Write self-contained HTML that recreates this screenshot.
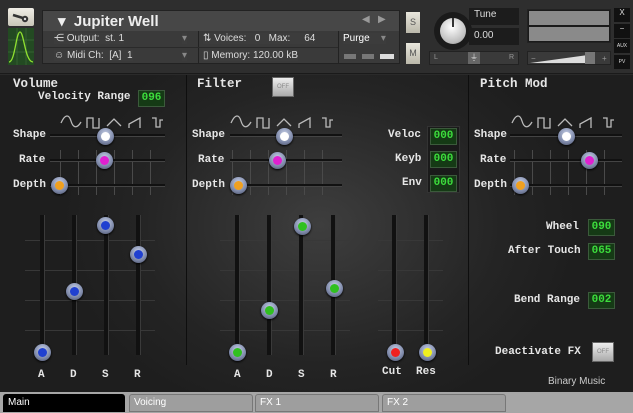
<!DOCTYPE html><html><head><style>
*{margin:0;padding:0;box-sizing:border-box}
body{width:633px;height:413px;overflow:hidden;background:#2a2a2a;font-family:"Liberation Sans",sans-serif;position:relative}
.a{position:absolute}
.lbl{position:absolute;font-family:"Liberation Mono",monospace;font-weight:bold;font-size:11px;color:#e6e6e6;white-space:nowrap}
.ttl{font-size:12.5px}
.k{position:absolute;width:17px;height:17px;margin:-8px 0 0 -8px;border-radius:50%;background:radial-gradient(circle at 50% 35%,#c9d2ea,#7d88a8 60%,#454b60);box-shadow:0 1px 2px #000}
.k i{position:absolute;left:4px;top:4px;width:9px;height:9px;border-radius:50%}
.tr{position:absolute;height:3px;background:#111;border-bottom:1px solid #444}
.vt{position:absolute;width:5px;background:#111;border-right:1px solid #3a3a3a}
.dig{position:absolute;width:27px;height:17px;background:#153a15;border:1px solid #3b5a3b;color:#3cdc3c;font-family:"Liberation Mono",monospace;font-size:11px;font-weight:bold;text-align:center;line-height:15px}
.off{position:absolute;width:22px;height:20px;background:linear-gradient(#eee,#aaa);border:1px solid #666;font-size:6px;color:#888;text-align:center;line-height:18px}
.g{position:absolute;width:1px;background:#4a4a4a}
.tab{position:absolute;top:394px;height:18px;background:#9e9e9e;border:1px solid #777;border-radius:3px 3px 0 0;font-size:10px;color:#fff;padding:2px 4px}
.hb{position:absolute;background:#3c3c3c;color:#ddd;font-size:10px}
</style></head><body>
<div class="a" style="left:0;top:0;width:633px;height:74px;background:#2e2e2e;border-bottom:1px solid #1a1a1a"></div>
<div class="a" style="left:8px;top:8px;width:26px;height:18px;background:linear-gradient(#f0eee6,#c9c6b8);border-radius:2px"></div>
<svg class="a" style="left:8px;top:8px" width="26" height="18"><circle cx="17" cy="11" r="3.2" fill="#333"/><path d="M5 7L15 10" stroke="#333" stroke-width="2.5"/><circle cx="17" cy="11" r="1.2" fill="#ddd"/></svg>
<svg class="a" style="left:8px;top:28px" width="26" height="37"><rect width="26" height="37" fill="#234a22"/><path d="M0 12H26M0 24H26M9 0V37M18 0V37" stroke="#3c6a3a" stroke-width=".7"/><path d="M1 34C7 34 8 4 12 4S17 34 25 34" stroke="#8fe030" fill="none" stroke-width="1.3"/></svg>
<div class="a" style="left:42px;top:10px;width:358px;height:54px;background:#3a3a3a;border:1px solid #222"></div>
<div class="a" style="left:43px;top:11px;width:356px;height:20px;background:#474747"></div>
<div class="a" style="left:58px;top:12px;color:#eee;font-size:15px;font-weight:bold">▾&nbsp; Jupiter Well</div>
<div class="a" style="left:362px;top:14px;color:#999;font-size:10px">◀ &nbsp; ▶</div>
<div class="hb" style="left:54px;top:33px">⋲ Output: &nbsp;st. 1</div><div class="hb" style="left:182px;top:33px;color:#888">▾</div>
<div class="hb" style="left:54px;top:50px">☺ Midi Ch: &nbsp;[A] &nbsp;1</div><div class="hb" style="left:182px;top:50px;color:#888">▾</div>
<div class="hb" style="left:203px;top:33px">⇅ Voices: &nbsp;&nbsp;0 &nbsp;&nbsp;Max: &nbsp;&nbsp;&nbsp;&nbsp;64</div>
<div class="hb" style="left:203px;top:50px">▯ Memory: 120.00 kB</div>
<div class="hb" style="left:343px;top:33px;color:#fff">Purge &nbsp;&nbsp;&nbsp;<span style="color:#888">▾</span></div>
<div class="a" style="left:198px;top:31px;width:1px;height:33px;background:#222"></div>
<div class="a" style="left:338px;top:31px;width:1px;height:33px;background:#222"></div>
<div class="a" style="left:43px;top:47px;width:295px;height:1px;background:#2a2a2a"></div>
<div class="a" style="left:344px;top:54px;width:12px;height:5px;background:#777"></div><div class="a" style="left:362px;top:54px;width:12px;height:5px;background:#777"></div><div class="a" style="left:380px;top:54px;width:14px;height:5px;background:#ddd"></div>
<div class="a" style="left:406px;top:12px;width:14px;height:21px;background:linear-gradient(#e8e6dc,#bbb8aa);color:#555;font-size:9px;text-align:center;line-height:21px">S</div>
<div class="a" style="left:406px;top:43px;width:14px;height:21px;background:linear-gradient(#e8e6dc,#bbb8aa);color:#555;font-size:9px;text-align:center;line-height:21px">M</div>
<div class="a" style="left:434px;top:12px;width:38px;height:38px;border-radius:50%;background:#1a1a1a"></div>
<div class="a" style="left:440px;top:18px;width:26px;height:26px;border-radius:50%;background:radial-gradient(circle at 45% 35%,#fff,#bbb 70%,#777)"></div>
<div class="a" style="left:452px;top:18px;width:2px;height:9px;background:#333"></div>
<div class="a" style="left:469px;top:8px;width:50px;height:17px;background:#1c1c1c;color:#ddd;font-size:10px;padding:1px 5px">Tune</div>
<div class="a" style="left:469px;top:28px;width:50px;height:17px;background:#1c1c1c;color:#ddd;font-size:10px;padding:2px 5px">0.00</div>
<div class="a" style="left:429px;top:51px;width:90px;height:14px;background:#3a3a3a;border:1px solid #222;color:#999;font-size:7px;padding:2px 4px">L<span style="position:absolute;right:4px">R</span><span style="position:absolute;left:38px;top:0;width:12px;height:12px;background:#666;color:#ddd;text-align:center;font-size:8px">⏚</span></div>
<div class="a" style="left:527px;top:9px;width:84px;height:34px;background:#1a1a1a;border:1px solid #222"></div>
<div class="a" style="left:529px;top:11px;width:80px;height:14px;background:#8a8a8a"></div>
<div class="a" style="left:529px;top:27px;width:80px;height:14px;background:#8a8a8a"></div>
<div class="a" style="left:527px;top:51px;width:84px;height:14px;background:#3a3a3a;border:1px solid #222"></div>
<svg class="a" style="left:528px;top:52px" width="82" height="12"><path d="M2 11L60 11L60 3Z" fill="#ddd"/><rect x="57" y="0" width="10" height="12" fill="#777"/><text x="3" y="9" fill="#999" font-size="8">−</text><text x="74" y="9" fill="#999" font-size="8">+</text></svg>
<div class="a" style="left:614px;top:8px;width:16px;height:14px;background:#111;color:#ddd;font-size:8px;text-align:center">X</div>
<div class="a" style="left:614px;top:24px;width:16px;height:14px;background:#111;color:#ddd;font-size:8px;text-align:center">−</div>
<div class="a" style="left:614px;top:39px;width:16px;height:14px;background:#111;color:#ddd;font-size:5px;text-align:center;line-height:14px">AUX</div>
<div class="a" style="left:614px;top:55px;width:16px;height:14px;background:#111;color:#ddd;font-size:5px;text-align:center;line-height:14px">PV</div>
<div class="a" style="left:0;top:75px;width:633px;height:318px;background:radial-gradient(ellipse 260px 200px at 320px 150px,#3e3e3e,#242424 70%,#1e1e1e)"></div>
<div class="a" style="left:186px;top:75px;width:1px;height:290px;background:#0e0e0e"></div>
<div class="a" style="left:468px;top:75px;width:1px;height:290px;background:#0e0e0e"></div>
<div class="lbl ttl" style="left:13px;top:77px">Volume</div>
<div class="lbl" style="left:38px;top:91px">Velocity Range</div>
<div class="dig" style="left:138px;top:90px">096</div>
<div class="lbl ttl" style="left:197px;top:77px">Filter</div>
<div class="off" style="left:272px;top:77px">OFF</div>
<div class="lbl ttl" style="left:480px;top:77px">Pitch Mod</div>
<svg class="a" style="left:60px;top:114px" width="110" height="16"><g stroke="#bbb" fill="none" stroke-width="1.3"><path d="M1 9C5 0 9 0 11 7S17 15 21 8"/><path d="M27 14V4H33V14H39V4"/><path d="M47 12L54 5L61 12"/><path d="M69 14V10L80 4V14"/><path d="M92 4H96V13H100V6H103"/></g></svg>
<svg class="a" style="left:230px;top:114px" width="110" height="16"><g stroke="#bbb" fill="none" stroke-width="1.3"><path d="M1 9C5 0 9 0 11 7S17 15 21 8"/><path d="M27 14V4H33V14H39V4"/><path d="M47 12L54 5L61 12"/><path d="M69 14V10L80 4V14"/><path d="M92 4H96V13H100V6H103"/></g></svg>
<svg class="a" style="left:511px;top:114px" width="110" height="16"><g stroke="#bbb" fill="none" stroke-width="1.3"><path d="M1 9C5 0 9 0 11 7S17 15 21 8"/><path d="M27 14V4H33V14H39V4"/><path d="M47 12L54 5L61 12"/><path d="M69 14V10L80 4V14"/><path d="M92 4H96V13H100V6H103"/></g></svg>
<div class="g" style="left:60px;top:150px;height:45px"></div><div class="g" style="left:78px;top:150px;height:45px"></div><div class="g" style="left:96px;top:150px;height:45px"></div><div class="g" style="left:114px;top:150px;height:45px"></div><div class="g" style="left:132px;top:150px;height:45px"></div><div class="g" style="left:150px;top:150px;height:45px"></div>
<div class="tr" style="left:50px;top:134px;width:115px"></div><div class="tr" style="left:50px;top:159px;width:115px"></div><div class="tr" style="left:50px;top:184px;width:115px"></div>
<div class="lbl" style="left:13px;top:129px">Shape</div><div class="lbl" style="left:19px;top:154px">Rate</div><div class="lbl" style="left:13px;top:179px">Depth</div>
<div class="k" style="left:105px;top:136px"><i style="background:#fff"></i></div>
<div class="k" style="left:104px;top:160px"><i style="background:#e020d0"></i></div>
<div class="k" style="left:59px;top:185px"><i style="background:#f0a020"></i></div>
<div class="g" style="left:232px;top:150px;height:45px"></div><div class="g" style="left:250px;top:150px;height:45px"></div><div class="g" style="left:268px;top:150px;height:45px"></div><div class="g" style="left:286px;top:150px;height:45px"></div><div class="g" style="left:304px;top:150px;height:45px"></div><div class="g" style="left:322px;top:150px;height:45px"></div>
<div class="tr" style="left:230px;top:134px;width:112px"></div><div class="tr" style="left:230px;top:159px;width:112px"></div><div class="tr" style="left:230px;top:184px;width:112px"></div>
<div class="lbl" style="left:192px;top:129px">Shape</div><div class="lbl" style="left:198px;top:154px">Rate</div><div class="lbl" style="left:192px;top:179px">Depth</div>
<div class="k" style="left:284px;top:136px"><i style="background:#fff"></i></div>
<div class="k" style="left:277px;top:160px"><i style="background:#e020d0"></i></div>
<div class="k" style="left:238px;top:185px"><i style="background:#f0a020"></i></div>
<div class="a" style="left:427px;top:126px;width:33px;height:67px;background:#1a1a1a;border:1px solid #333"></div>
<div class="lbl" style="left:388px;top:129px">Veloc</div><div class="dig" style="left:430px;top:128px">000</div>
<div class="lbl" style="left:395px;top:153px">Keyb</div><div class="dig" style="left:430px;top:151px">000</div>
<div class="lbl" style="left:402px;top:177px">Env</div><div class="dig" style="left:430px;top:175px">000</div>
<div class="g" style="left:514px;top:150px;height:45px"></div><div class="g" style="left:532px;top:150px;height:45px"></div><div class="g" style="left:550px;top:150px;height:45px"></div><div class="g" style="left:568px;top:150px;height:45px"></div><div class="g" style="left:586px;top:150px;height:45px"></div><div class="g" style="left:604px;top:150px;height:45px"></div>
<div class="tr" style="left:510px;top:134px;width:112px"></div><div class="tr" style="left:510px;top:159px;width:112px"></div><div class="tr" style="left:510px;top:184px;width:112px"></div>
<div class="lbl" style="left:474px;top:129px">Shape</div><div class="lbl" style="left:480px;top:154px">Rate</div><div class="lbl" style="left:474px;top:179px">Depth</div>
<div class="k" style="left:566px;top:136px"><i style="background:#fff"></i></div>
<div class="k" style="left:589px;top:160px"><i style="background:#e020d0"></i></div>
<div class="k" style="left:520px;top:185px"><i style="background:#f0a020"></i></div>
<div class="lbl" style="left:546px;top:221px">Wheel</div><div class="dig" style="left:588px;top:219px">090</div>
<div class="lbl" style="left:508px;top:245px">After Touch</div><div class="dig" style="left:588px;top:243px">065</div>
<div class="lbl" style="left:514px;top:294px">Bend Range</div><div class="dig" style="left:588px;top:292px">002</div>
<div class="lbl" style="left:495px;top:346px">Deactivate FX</div>
<div class="off" style="left:592px;top:342px">OFF</div>
<div class="a" style="left:548px;top:376px;color:#ccc;font-size:10px">Binary Music</div>
<div class="a" style="left:25px;top:240px;width:130px;height:1px;background:#383838;box-shadow:0 30px #383838,0 60px #383838,0 90px #383838"></div>
<div class="a" style="left:220px;top:240px;width:130px;height:1px;background:#383838;box-shadow:0 30px #383838,0 60px #383838,0 90px #383838"></div>
<div class="a" style="left:378px;top:240px;width:65px;height:1px;background:#383838;box-shadow:0 30px #383838,0 60px #383838,0 90px #383838"></div>
<div class="vt" style="left:40px;top:215px;height:140px"></div><div class="vt" style="left:72px;top:215px;height:140px"></div><div class="vt" style="left:104px;top:215px;height:140px"></div><div class="vt" style="left:136px;top:215px;height:140px"></div>
<div class="vt" style="left:235px;top:215px;height:140px"></div><div class="vt" style="left:267px;top:215px;height:140px"></div><div class="vt" style="left:299px;top:215px;height:140px"></div><div class="vt" style="left:331px;top:215px;height:140px"></div>
<div class="vt" style="left:392px;top:215px;height:140px"></div><div class="vt" style="left:424px;top:215px;height:140px"></div>
<div class="k" style="left:42px;top:352px"><i style="background:#2040d0"></i></div>
<div class="k" style="left:74px;top:291px"><i style="background:#2040d0"></i></div>
<div class="k" style="left:105px;top:225px"><i style="background:#2040d0"></i></div>
<div class="k" style="left:138px;top:254px"><i style="background:#2040d0"></i></div>
<div class="k" style="left:237px;top:352px"><i style="background:#30c020"></i></div>
<div class="k" style="left:269px;top:310px"><i style="background:#30c020"></i></div>
<div class="k" style="left:302px;top:226px"><i style="background:#30c020"></i></div>
<div class="k" style="left:334px;top:288px"><i style="background:#30c020"></i></div>
<div class="k" style="left:395px;top:352px"><i style="background:#f02020"></i></div>
<div class="k" style="left:427px;top:352px"><i style="background:#f0f020"></i></div>
<div class="lbl" style="left:38px;top:369px">A</div><div class="lbl" style="left:70px;top:369px">D</div><div class="lbl" style="left:102px;top:369px">S</div><div class="lbl" style="left:134px;top:369px">R</div>
<div class="lbl" style="left:234px;top:369px">A</div><div class="lbl" style="left:266px;top:369px">D</div><div class="lbl" style="left:298px;top:369px">S</div><div class="lbl" style="left:330px;top:369px">R</div>
<div class="lbl" style="left:382px;top:366px">Cut</div><div class="lbl" style="left:416px;top:366px">Res</div>
<div class="a" style="left:0;top:392px;width:633px;height:21px;background:#a6a6a6"></div>
<div class="tab" style="left:3px;width:122px;background:#000;border-color:#000">Main</div>
<div class="tab" style="left:129px;width:124px">Voicing</div>
<div class="tab" style="left:255px;width:124px">FX 1</div>
<div class="tab" style="left:382px;width:124px">FX 2</div>
</body></html>
